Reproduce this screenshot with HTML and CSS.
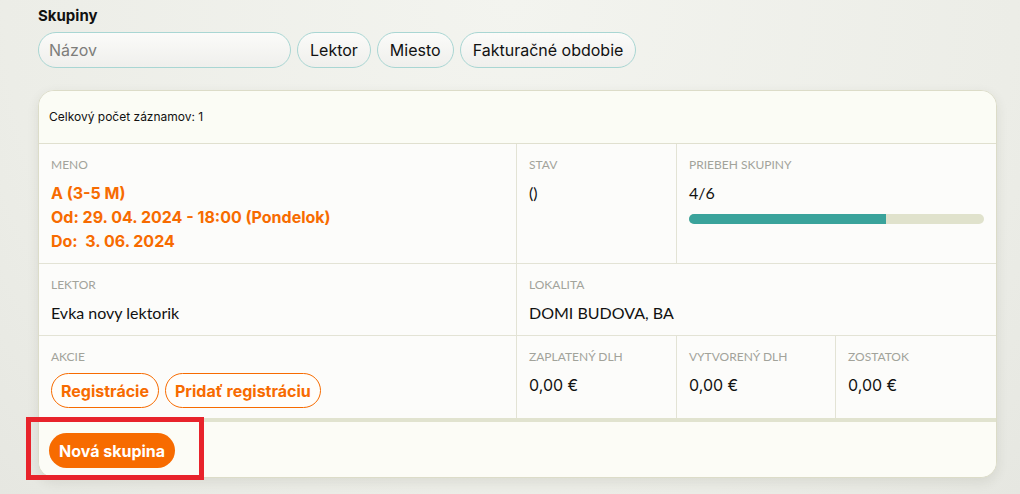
FILE: index.html
```html
<!DOCTYPE html>
<html>
<head>
    <meta charset="utf-8"/>
    <title>Skupiny</title>
    <link rel="stylesheet" href="styles.css">
</head>
<body>

<div id="page">
    <h2 class="title">Skupiny</h2>

    <div class="filters">
        <input type="text" class="search" placeholder="Názov">
        <button class="filter">Lektor</button>
        <button class="filter">Miesto</button>
        <button class="filter">Fakturačné obdobie</button>
    </div>

    <div class="card">
        <div class="card-head">Celkový počet záznamov: 1</div>

        <div class="grid">
            <div class="cell">
                <div class="label">Meno</div>
                <div class="name">
                    A (3-5 M)<br>
                    Od: 29. 04. 2024 - 18:00 (Pondelok)<br>
                    Do:&nbsp; 3. 06. 2024
                </div>
            </div>
            <div class="cell">
                <div class="label">Stav</div>
                <div class="value">()</div>
            </div>
            <div class="cell span2">
                <div class="label">Priebeh skupiny</div>
                <div class="value">4/6</div>
                <div class="progress"><div class="progress-fill" style="width: 66.67%"></div></div>
            </div>

            <div class="cell">
                <div class="label">Lektor</div>
                <div class="value">Evka novy lektorik</div>
            </div>
            <div class="cell span3">
                <div class="label">Lokalita</div>
                <div class="value">DOMI BUDOVA, BA</div>
            </div>

            <div class="cell">
                <div class="label">Akcie</div>
                <div class="actions">
                    <button class="outline">Registrácie</button>
                    <button class="outline">Pridať registráciu</button>
                </div>
            </div>
            <div class="cell">
                <div class="label">Zaplatený dlh</div>
                <div class="value money">0,00 €</div>
            </div>
            <div class="cell">
                <div class="label">Vytvorený dlh</div>
                <div class="value money">0,00 €</div>
            </div>
            <div class="cell">
                <div class="label">Zostatok</div>
                <div class="value money">0,00 €</div>
            </div>
        </div>

        <div class="card-foot">
            <button class="primary">Nová skupina</button>
        </div>
    </div>

    <!-- highlight box drawn over the footer button -->
    <div class="highlight"></div>
</div>

</body>
</html>
```

FILE: styles.css
```css
body {
    margin: 0;
    font-family: Lato, "Noto Sans", sans-serif;
    color: #111;
    background: radial-gradient(ellipse at 50% 0%, #f3f4ef 0%, #ecede7 70%, #e6e7e1 100%);
    height: 494px;
    overflow: hidden;
}

#page {
    position: relative;
    padding: 6px 23px 0 38px;
}

.title {
    font-family: Inter, sans-serif;
    font-size: 15px;
    font-weight: 700;
    margin: 0 0 6px 0;
    line-height: 20px;
}

.filters {
    display: flex;
    gap: 6px;
    height: 36px;
}

.search,
.filter {
    height: 36px;
    box-sizing: border-box;
    border: 1px solid #a9d6d3;
    border-radius: 18px;
    background: linear-gradient(#fbfbf9, #efefec);
    font-family: Inter, sans-serif;
    font-size: 16px;
    color: #111;
}

.search {
    width: 253px;
    padding: 0 10px;
    outline: none;
}

.search::placeholder {
    color: #7d7d7a;
}

.filter {
    padding: 0 12px;
}

.card {
    margin-top: 22px;
    width: 959px;
    box-sizing: border-box;
    border: 1px solid #dcdcc8;
    border-radius: 16px;
    background: #fcfcf8;
    box-shadow: 0 4px 12px rgba(60, 60, 40, 0.1);
    overflow: hidden;
}

.card-head {
    height: 53px;
    box-sizing: border-box;
    padding: 18px 10px 0 10px;
    font-family: Inter, sans-serif;
    font-size: 12px;
    border-bottom: 1px solid #e0e0cf;
    background: #fbfcf5;
}

.grid {
    display: grid;
    grid-template-columns: 478px 160px 159px 1fr;
    border-bottom: 4px solid #e1e3cf;
    background: #fcfcfa;
}

.cell {
    padding: 13px 12px 10px 12px;
    border-right: 1px solid #e3e3d5;
    border-bottom: 1px solid #e3e3d5;
}

.cell:nth-child(3),
.cell:nth-child(5),
.cell:nth-child(9) {
    border-right: none;
}

.cell:nth-child(n+6) {
    border-bottom: none;
}

.span2 { grid-column: span 2; }
.span3 { grid-column: span 3; }

.label {
    font-size: 12px;
    line-height: 15px;
    color: #a2a39a;
    text-transform: uppercase;
    margin-bottom: 9px;
}

.value {
    font-size: 16px;
    line-height: 24px;
}

.money {
    font-family: Inter, sans-serif;
}

.name {
    font-family: Inter, sans-serif;
    font-size: 16px;
    font-weight: 700;
    line-height: 24px;
    color: #f76b00;
}

.progress {
    margin-top: 9px;
    height: 10px;
    border-radius: 5px;
    background: #e0e2cc;
    overflow: hidden;
}

.progress-fill {
    height: 100%;
    background: #3aa39b;
}

.actions {
    display: flex;
    gap: 6px;
}

.outline {
    height: 35px;
    padding: 0 9px;
    border: 1px solid #f76b00;
    border-radius: 18px;
    background: #fffefb;
    color: #f76b00;
    font-family: Inter, sans-serif;
    font-size: 16px;
    font-weight: 700;
}

.card-foot {
    height: 55px;
    box-sizing: border-box;
    padding: 11px 10px 0 10px;
    background: #fcfcf6;
}

.primary {
    height: 35px;
    padding: 0 10px;
    border: none;
    border-radius: 18px;
    background: #f76b00;
    color: #fff;
    font-family: Inter, sans-serif;
    font-size: 16px;
    font-weight: 700;
}

.highlight {
    position: absolute;
    left: 26px;
    top: 417px;
    width: 178px;
    height: 63px;
    box-sizing: border-box;
    border: 5px solid #e8232b;
}
```
